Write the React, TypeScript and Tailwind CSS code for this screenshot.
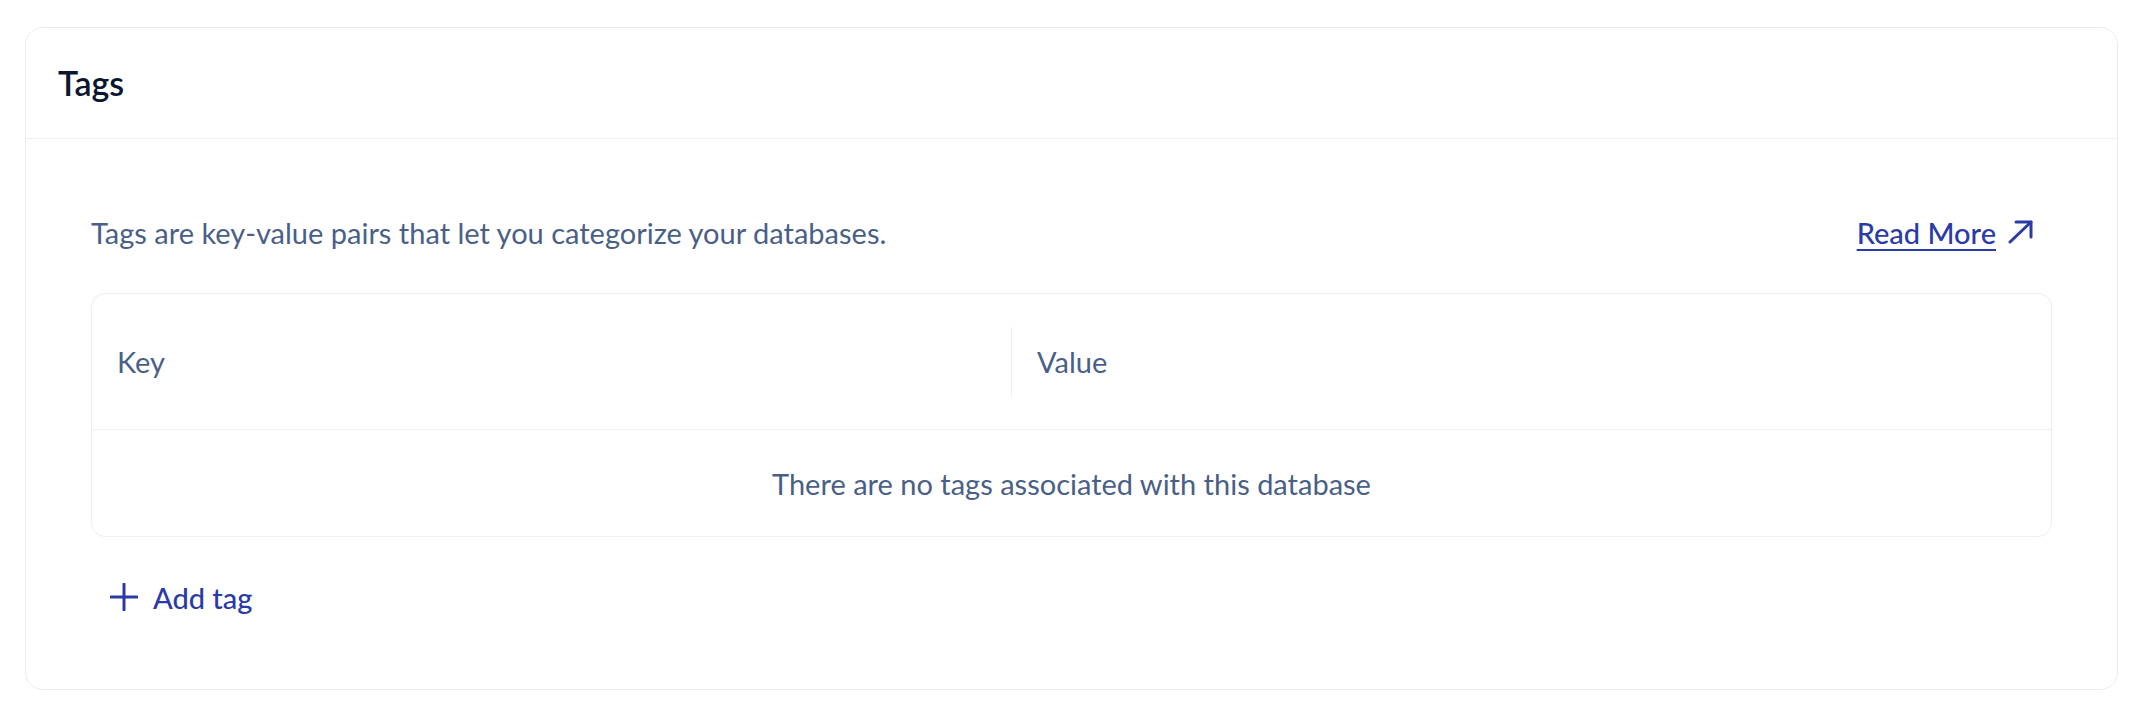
import React from "react";

const ArrowUpRight = () => (
  <svg width="26" height="24" viewBox="0 0 26 24" fill="none" stroke="currentColor" strokeWidth={3} strokeLinecap="round" strokeLinejoin="round">
    <path d="M2 22 L23 2" />
    <path d="M8 2 H23 V17" />
  </svg>
);

const Plus = () => (
  <svg width="28" height="28" viewBox="0 0 28 28" fill="none" stroke="currentColor" strokeWidth={3} strokeLinecap="round">
    <path d="M14 1 V27" />
    <path d="M1 14 H27" />
  </svg>
);

export default function App() {
  return (
    <div
      className="min-h-[712px] bg-white pl-[25px] pr-[26px] pt-[27px]"
      style={{ fontFamily: "Lato, 'Noto Sans', sans-serif" }}
    >
      <div className="rounded-[18px] border border-[#ebebeb] bg-white">
        {/* Header */}
        <div className="flex h-[111px] items-center border-b border-[#efefef] px-[32px]">
          <h2 className="text-[34px] font-semibold leading-none text-[#0b1630]">Tags</h2>
        </div>

        {/* Body */}
        <div className="px-[65px] pt-[73px] pb-[68px]">
          <div className="flex h-[40px] items-center justify-between">
            <p className="text-[29px] leading-none text-[#4a5f88]">
              Tags are key-value pairs that let you categorize your databases.
            </p>
            <a href="#" className="mr-[18px] flex items-center gap-[12px] text-[29px] font-medium leading-none text-[#2a3ba7]">
              <span className="underline underline-offset-[5px] decoration-2">Read More</span>
              <ArrowUpRight />
            </a>
          </div>

          {/* Table */}
          <div className="mt-[41px] rounded-[14px] border border-[#eeeeee]">
            <div className="flex h-[136px] items-center border-b border-[#efefef]">
              <div className="w-[919px] pl-[25px] text-[29px] leading-none text-[#4a5f88]">Key</div>
              <div className="h-[70px] w-px bg-[#eeeeee]" />
              <div className="flex-1 pl-[25px] text-[29px] leading-none text-[#4a5f88]">Value</div>
            </div>
            <div className="flex h-[106px] items-center justify-center text-[29px] leading-none text-[#4a5f88]">
              There are no tags associated with this database
            </div>
          </div>

          {/* Add tag */}
          <button className="mt-[36px] flex h-[48px] items-center gap-[15px] pl-[19px] text-[29px] font-medium leading-none text-[#2a3ba7]">
            <Plus />
            <span>Add tag</span>
          </button>
        </div>
      </div>
    </div>
  );
}
